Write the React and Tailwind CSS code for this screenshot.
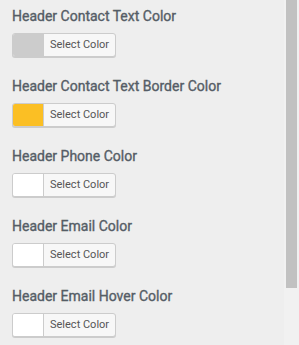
import React from 'react';

const fields = [
  { label: 'Header Contact Text Color', color: '#cccccc' },
  { label: 'Header Contact Text Border Color', color: '#fbbf24' },
  { label: 'Header Phone Color', color: '#ffffff' },
  { label: 'Header Email Color', color: '#ffffff' },
  { label: 'Header Email Hover Color', color: '#ffffff' },
];

const ColorControl = ({ label, color }) => (
  <div className="flex flex-col h-[70px]">
    <span
      className="text-[14px] leading-[20px] text-[#555d66] mt-[6px]"
      style={{ WebkitTextStroke: '0.35px #555d66' }}
    >
      {label}
    </span>
    <button className="mt-[7px] flex h-[24px] w-[104px] overflow-hidden rounded-[3px] border border-[#cccccc] shadow-[0_1px_0_#cccccc] bg-[#f7f7f7]">
      <span className="h-full w-[31px] border-r border-[#cccccc]" style={{ backgroundColor: color }} />
      <span className="flex-1 text-[11px] leading-[22px] text-[#555555] text-left pl-[6px]">Select Color</span>
    </button>
  </div>
);

export default function App() {
  return (
    <div className="flex h-[345px] w-[299px] bg-[#eeeeee] overflow-hidden" style={{ fontFamily: 'Roboto, sans-serif' }}>
      <div className="flex-1 pl-[12px]">
        {fields.map((f) => (
          <ColorControl key={f.label} {...f} />
        ))}
      </div>
      <div className="w-[15px] h-full bg-[#f1f1f1] pl-[2px]">
        <div className="w-[11px] h-[288px] bg-[#c1c1c1]" />
      </div>
    </div>
  );
}
